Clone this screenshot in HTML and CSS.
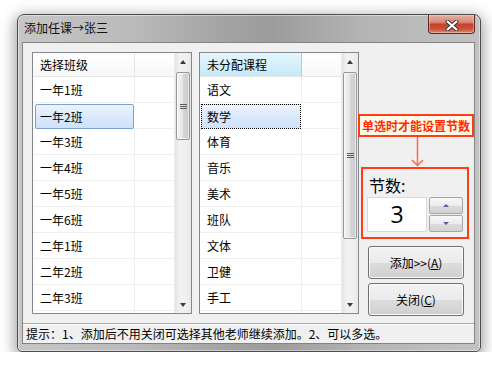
FILE: index.html
```html
<!DOCTYPE html>
<html lang="zh-CN">

<head>
    <meta charset="UTF-8">
    <title>添加任课</title>
    <link rel="stylesheet" href="styles.css">
</head>

<body>
    <div class="window">
        <div class="titlebar">
            <span class="title">添加任课→张三</span>
            <button class="close-btn">
                <svg width="14" height="11" viewBox="0 0 14 11">
                    <path d="M2.5 1.5 L11.5 9.5 M11.5 1.5 L2.5 9.5" stroke="#3b3b3b" stroke-width="4" stroke-linecap="round" />
                    <path d="M2.5 1.5 L11.5 9.5 M11.5 1.5 L2.5 9.5" stroke="#fff" stroke-width="2" stroke-linecap="round" />
                </svg>
            </button>
        </div>
        <div class="client">
            <div class="main">
                <!-- 班级列表 -->
                <div class="listview">
                    <div class="list-body">
                        <div class="list-header"><div class="cell">选择班级</div><div class="cell"></div></div>
                        <div class="row"><div class="cell">一年1班</div><div class="cell"></div></div>
                        <div class="row"><div class="cell selected">一年2班</div><div class="cell"></div></div>
                        <div class="row"><div class="cell">一年3班</div><div class="cell"></div></div>
                        <div class="row"><div class="cell">一年4班</div><div class="cell"></div></div>
                        <div class="row"><div class="cell">一年5班</div><div class="cell"></div></div>
                        <div class="row"><div class="cell">一年6班</div><div class="cell"></div></div>
                        <div class="row"><div class="cell">二年1班</div><div class="cell"></div></div>
                        <div class="row"><div class="cell">二年2班</div><div class="cell"></div></div>
                        <div class="row"><div class="cell">二年3班</div><div class="cell"></div></div>
                        <div class="row"><div class="cell"></div><div class="cell"></div></div>
                    </div>
                    <div class="scrollbar">
                        <div class="sb-btn"><span class="arrow-up"></span></div>
                        <div class="sb-track"><div class="sb-thumb thumb-short"><span class="grip"></span></div></div>
                        <div class="sb-btn"><span class="arrow-down"></span></div>
                    </div>
                </div>

                <!-- 课程列表 -->
                <div class="listview">
                    <div class="list-body">
                        <div class="list-header"><div class="cell sorted">未分配课程</div><div class="cell"></div></div>
                        <div class="row"><div class="cell">语文</div><div class="cell"></div></div>
                        <div class="row"><div class="cell selected focused">数学</div><div class="cell"></div></div>
                        <div class="row"><div class="cell">体育</div><div class="cell"></div></div>
                        <div class="row"><div class="cell">音乐</div><div class="cell"></div></div>
                        <div class="row"><div class="cell">美术</div><div class="cell"></div></div>
                        <div class="row"><div class="cell">班队</div><div class="cell"></div></div>
                        <div class="row"><div class="cell">文体</div><div class="cell"></div></div>
                        <div class="row"><div class="cell">卫健</div><div class="cell"></div></div>
                        <div class="row"><div class="cell">手工</div><div class="cell"></div></div>
                        <div class="row"><div class="cell"></div><div class="cell"></div></div>
                    </div>
                    <div class="scrollbar">
                        <div class="sb-btn"><span class="arrow-up"></span></div>
                        <div class="sb-track"><div class="sb-thumb thumb-long"><span class="grip"></span></div></div>
                        <div class="sb-btn"><span class="arrow-down"></span></div>
                    </div>
                </div>

                <div class="panel">
                    <div class="tip">单选时才能设置节数</div>
                    <svg class="tip-arrow" width="116" height="30" viewBox="0 0 116 30">
                        <path d="M59.5 0 V28.5 M54 23 L59.5 28.5 L65 23" fill="none" stroke="#fa6a4c" stroke-width="1.5" />
                    </svg>
                    <div class="count-box">
                        <div class="count-label">节数:</div>
                        <div class="spinner">
                            <div class="spin-value">3</div>
                            <div class="spin-btns">
                                <div class="spin-btn"><span class="spin-up"></span></div>
                                <div class="spin-btn"><span class="spin-down"></span></div>
                            </div>
                        </div>
                    </div>
                    <button class="btn btn-add">添加&gt;&gt;(<u>A</u>)</button>
                    <button class="btn btn-close">关闭(<u>C</u>)</button>
                </div>
            </div>
            <div class="statusbar">提示：1、添加后不用关闭可选择其他老师继续添加。2、可以多选。</div>
        </div>
    </div>
</body>

</html>
```

FILE: styles.css
```css
/* 页面 */
body {
    margin: 0;
    background-color: #fff;
    font-family: 'Noto Sans CJK SC', sans-serif;
    font-size: 12px;
    color: #000;
}

/* 窗口框架 */
.window {
    margin: 14px 0 0 17px;
    width: 464px;
    height: 338px;
    box-sizing: border-box;
    display: flex;
    flex-direction: column;
    padding: 0 5px 7px 4px;
    border: 1px solid #4d4d4d;
    border-radius: 7px 7px 5px 5px;
    background: linear-gradient(to right, #c6c6c6 0%, #bababa 25%, #a3a3a3 45%, #9c9c9c 55%, #b4b4b4 75%, #c2c2c2 100%);
    box-shadow: 0 4px 14px 3px rgba(0, 0, 0, 0.35), inset 0 0 0 1px rgba(255, 255, 255, 0.45);
}

.titlebar {
    height: 27px;
    display: flex;
    justify-content: space-between;
    align-items: flex-start;
}

.title {
    padding: 5px 0 0 2px;
    line-height: 16px;
    font-size: 12px;
    color: #111;
}

.close-btn {
    width: 47px;
    height: 19px;
    padding: 0;
    display: flex;
    align-items: center;
    justify-content: center;
    border: 1px solid #5e2a22;
    border-top: none;
    border-radius: 0 0 4px 4px;
    background: linear-gradient(#e6b0a4 0%, #d88a78 40%, #c4422a 52%, #cc5238 78%, #dd8c74 100%);
    box-shadow: inset 0 0 0 1px rgba(255, 220, 210, 0.45);
}

.close-btn svg {
    margin-top: 2px;
}

/* 客户区 */
.client {
    flex: 1;
    display: flex;
    flex-direction: column;
    background-color: #f0f0f0;
    border: 1px solid #838383;
}

.main {
    height: 264px;
    display: flex;
    align-items: flex-start;
    padding: 9px 0 0 9px;
}

/* 列表 */
.listview {
    width: 160px;
    height: 262px;
    box-sizing: border-box;
    display: flex;
    overflow: hidden;
    border: 1px solid #828790;
    background-color: #fff;
}

.listview + .listview {
    margin-left: 7px;
}

.list-body {
    flex: 1;
    overflow: hidden;
}

.list-header,
.row {
    display: flex;
    box-sizing: border-box;
}

.list-header {
    height: 24px;
    border-bottom: 1px solid #e5e5e5;
    background: linear-gradient(#ffffff, #f6f7f8);
}

.row {
    height: 26px;
    border-bottom: 1px solid #efefef;
}

.cell {
    flex: 1;
    box-sizing: border-box;
    padding-left: 7px;
    line-height: 25px;
    white-space: nowrap;
}

.cell:first-child {
    flex: none;
    width: 102px;
    border-right: 1px solid #efefef;
}

.list-header .cell:first-child {
    border-right: 1px solid #e3e4e5;
    line-height: 23px;
}

.list-header .cell.sorted {
    background: linear-gradient(#e4f6fd, #c6eaf9);
    border-right: 1px solid #96d5f0;
}

.row .cell.selected {
    width: 99px;
    margin: 1px 1px 0 2px;
    padding-left: 4px;
    line-height: 23px;
    height: 25px;
    border: 1px solid #7da2ce;
    border-radius: 2px;
    background: linear-gradient(#eef5fe, #dae9fc 50%, #cfe2fa);
}

.row .cell.focused {
    border: 1px dotted #000;
    border-radius: 0;
    margin: 1px 1px 0 1px;
    width: 100px;
    padding-left: 5px;
}

/* 滚动条 */
.scrollbar {
    width: 17px;
    display: flex;
    flex-direction: column;
    background: linear-gradient(to right, #e4e4e4, #f2f2f2 30%, #f0f0f0 70%, #e8e8e8);
    border-left: 1px solid #ececec;
    box-sizing: border-box;
}

.sb-btn {
    height: 17px;
    display: flex;
    align-items: center;
    justify-content: center;
}

.arrow-up,
.arrow-down {
    width: 0;
    height: 0;
    border-left: 3.5px solid transparent;
    border-right: 3.5px solid transparent;
}

.arrow-up {
    border-bottom: 4px solid #3c3c3c;
}

.arrow-down {
    border-top: 4px solid #3c3c3c;
}

.sb-track {
    flex: 1;
    padding: 0 1px;
}

.sb-thumb {
    margin-top: 2px;
    display: flex;
    align-items: center;
    justify-content: center;
    box-sizing: border-box;
    border: 1px solid #989898;
    border-radius: 2px;
    background: linear-gradient(to right, #f3f3f3, #e6e6e6 45%, #d6d6d6 55%, #cacaca);
    box-shadow: inset 0 0 0 1px rgba(255, 255, 255, 0.6);
}

.thumb-short {
    height: 68px;
}

.thumb-long {
    height: 167px;
}

.grip {
    width: 7px;
    height: 1px;
    margin-bottom: 4px;
    background-color: #5c5c5c;
    box-shadow: 0 2px #5c5c5c, 0 4px #5c5c5c;
}

/* 右侧面板 */
.panel {
    width: 115px;
    display: flex;
    flex-direction: column;
    align-items: flex-start;
}

.tip {
    margin: 62px 0 0 -1px;
    width: 116px;
    height: 23px;
    box-sizing: border-box;
    border: 2px solid #ff3c14;
    background-color: #fffbe8;
    color: #ff2a00;
    font-weight: 700;
    line-height: 19px;
    text-align: center;
}

.tip-arrow {
    display: block;
    margin-left: -1px;
}

.count-box {
    margin-left: 2px;
    width: 108px;
    height: 72px;
    box-sizing: border-box;
    padding: 6px 4px 0 4px;
    border: 2px solid #ff3c14;
}

.count-label {
    padding-left: 2px;
    font-size: 16px;
    line-height: 20px;
}

.spinner {
    display: flex;
    gap: 2px;
    margin-top: 2px;
}

.spin-value {
    width: 60px;
    height: 35px;
    box-sizing: border-box;
    border: 1px solid #d9d9d9;
    background-color: #fff;
    font-family: 'Open Sans', sans-serif;
    font-size: 23px;
    line-height: 32px;
    text-align: center;
}

.spin-btns {
    width: 34px;
    display: flex;
    flex-direction: column;
    gap: 1px;
}

.spin-btn {
    height: 17px;
    box-sizing: border-box;
    display: flex;
    align-items: center;
    justify-content: center;
    border: 1px solid #a7a7a7;
    border-radius: 2px;
    background: linear-gradient(#f7f7f7, #ececec 50%, #dcdcdc 51%, #d2d2d2);
}

.spin-up,
.spin-down {
    width: 0;
    height: 0;
    border-left: 3px solid transparent;
    border-right: 3px solid transparent;
}

.spin-up {
    border-bottom: 3px solid #50629a;
}

.spin-down {
    border-top: 3px solid #50629a;
}

/* 按钮 */
.btn {
    margin-left: 9px;
    width: 96px;
    height: 33px;
    padding: 0;
    font-family: 'Noto Sans CJK SC', sans-serif;
    font-size: 12px;
    color: #000;
    border: 1px solid #707070;
    border-radius: 3px;
    background: linear-gradient(#f2f2f2 0%, #ebebeb 50%, #dddddd 51%, #cfcfcf 100%);
    box-shadow: inset 0 0 0 1px #fbfbfb;
}

.btn-add {
    margin-top: 7px;
}

.btn-close {
    margin-top: 4px;
}

/* 状态栏 */
.statusbar {
    margin-top: 7px;
    flex: 1;
    padding-left: 3px;
    line-height: 19px;
    border-top: 1px solid #a8a8a8;
    box-shadow: inset 0 1px #fff;
    white-space: nowrap;
}
```
